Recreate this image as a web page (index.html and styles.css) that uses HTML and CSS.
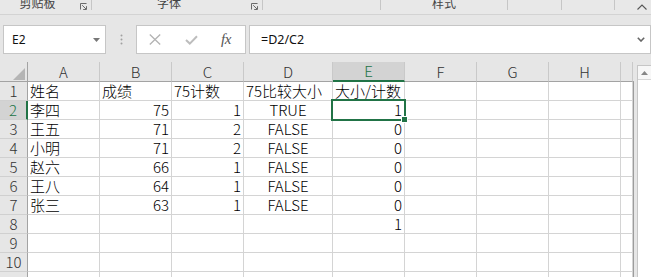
FILE: index.html
```html
<!DOCTYPE html>
<html lang="zh-CN">
<head>
<meta charset="utf-8">
<title>Excel</title>
<link rel="stylesheet" href="styles.css">
</head>
<body>
<div class="app">
<div class="ribbon">
  <div class="grp g1"><span class="glabel">剪贴板</span><svg class="launch" viewBox="0 0 7 7"><path d="M0.5 6.5V0.5H6.5M2.2 2.2L6 6M3.2 6.5H6.5V3.2" fill="none" stroke="#6b6b6b" stroke-width="1"/></svg></div>
  <div class="grp g2"><span class="glabel">字体</span><svg class="launch" viewBox="0 0 7 7"><path d="M0.5 6.5V0.5H6.5M2.2 2.2L6 6M3.2 6.5H6.5V3.2" fill="none" stroke="#6b6b6b" stroke-width="1"/></svg></div>
  <div class="grp g3"></div>
  <div class="grp g4"><span class="glabel">样式</span></div>
  <div class="grp g5"></div>
  <div class="grp g6"></div>
  <div class="grp g7"><svg class="caret" viewBox="0 0 10 6"><path d="M0.5 5.5L5 1L9.5 5.5" fill="none" stroke="#555" stroke-width="1.1"/></svg></div>
</div>

<div class="fbar">
  <div class="namebox"><span class="nbtext">E2</span><svg class="tri" viewBox="0 0 7 4"><path d="M0 0H7L3.5 4Z" fill="#777"/></svg></div>
  <div class="dots"><svg viewBox="0 0 3 11" width="3" height="11"><circle cx="1.5" cy="1.5" r="1" fill="#a0a0a0"/><circle cx="1.5" cy="5.5" r="1" fill="#a0a0a0"/><circle cx="1.5" cy="9.5" r="1" fill="#a0a0a0"/></svg></div>
  <div class="fbtns">
    <svg class="xbtn" viewBox="0 0 12 11"><path d="M0.8 0.5L11.2 10.5M11.2 0.5L0.8 10.5" stroke="#b3b3b3" stroke-width="1.3" fill="none"/></svg>
    <svg class="okbtn" viewBox="0 0 13 10"><path d="M1 5L4.8 8.6L12 1.2" stroke="#bdbdbd" stroke-width="2" fill="none"/></svg>
    <span class="fx">fx</span>
  </div>
  <div class="finput"><span class="ftext">=D2/C2</span><svg class="chev" viewBox="0 0 8 5"><path d="M0.8 0.8L4 4L7.2 0.8" fill="none" stroke="#666" stroke-width="1.6"/></svg></div>
</div>

<div class="sheetwrap">
  <div class="sheet">
    <div class="c ch corner"><svg class="selall" viewBox="0 0 12 12"><path d="M12 0V12H0Z" fill="#b5b5b5"/></svg></div>
    <div class="c ch">A</div><div class="c ch">B</div><div class="c ch">C</div><div class="c ch">D</div><div class="c ch act-col">E</div><div class="c ch">F</div><div class="c ch">G</div><div class="c ch">H</div><div class="c ch"></div><div class="edge edge-h"></div>

    <div class="c rh">1</div><div class="c">姓名</div><div class="c">成绩</div><div class="c">75计数</div><div class="c">75比较大小</div><div class="c">大小/计数</div><div class="c"></div><div class="c"></div><div class="c"></div><div class="c"></div><div class="edge"></div>

    <div class="c rh act-row">2</div><div class="c">李四</div><div class="c r">75</div><div class="c r">1</div><div class="c m">TRUE</div><div class="c r active">1<span class="selbox"><span class="handle"></span></span></div><div class="c"></div><div class="c"></div><div class="c"></div><div class="c"></div><div class="edge"></div>

    <div class="c rh">3</div><div class="c">王五</div><div class="c r">71</div><div class="c r">2</div><div class="c m">FALSE</div><div class="c r">0</div><div class="c"></div><div class="c"></div><div class="c"></div><div class="c"></div><div class="edge"></div>

    <div class="c rh">4</div><div class="c">小明</div><div class="c r">71</div><div class="c r">2</div><div class="c m">FALSE</div><div class="c r">0</div><div class="c"></div><div class="c"></div><div class="c"></div><div class="c"></div><div class="edge"></div>

    <div class="c rh">5</div><div class="c">赵六</div><div class="c r">66</div><div class="c r">1</div><div class="c m">FALSE</div><div class="c r">0</div><div class="c"></div><div class="c"></div><div class="c"></div><div class="c"></div><div class="edge"></div>

    <div class="c rh">6</div><div class="c">王八</div><div class="c r">64</div><div class="c r">1</div><div class="c m">FALSE</div><div class="c r">0</div><div class="c"></div><div class="c"></div><div class="c"></div><div class="c"></div><div class="edge"></div>

    <div class="c rh">7</div><div class="c">张三</div><div class="c r">63</div><div class="c r">1</div><div class="c m">FALSE</div><div class="c r">0</div><div class="c"></div><div class="c"></div><div class="c"></div><div class="c"></div><div class="edge"></div>

    <div class="c rh">8</div><div class="c"></div><div class="c"></div><div class="c"></div><div class="c"></div><div class="c r">1</div><div class="c"></div><div class="c"></div><div class="c"></div><div class="c"></div><div class="edge"></div>

    <div class="c rh">9</div><div class="c"></div><div class="c"></div><div class="c"></div><div class="c"></div><div class="c"></div><div class="c"></div><div class="c"></div><div class="c"></div><div class="c"></div><div class="edge"></div>

    <div class="c rh">10</div><div class="c"></div><div class="c"></div><div class="c"></div><div class="c"></div><div class="c"></div><div class="c"></div><div class="c"></div><div class="c"></div><div class="c"></div><div class="edge"></div>

    <div class="c rh"></div><div class="c"></div><div class="c"></div><div class="c"></div><div class="c"></div><div class="c"></div><div class="c"></div><div class="c"></div><div class="c"></div><div class="c"></div><div class="edge"></div>
  </div>
  <div class="vscroll">
    <div class="upbtn"><svg viewBox="0 0 7 4" width="7" height="4"><path d="M0 4L3.5 0L7 4Z" fill="#868686"/></svg></div>
  </div>
</div>
</div>
</body>
</html>
```

FILE: styles.css
```css
html, body {
  margin: 0;
  padding: 0;
}
body {
  background: #e6e6e6;
  font-family: "Noto Sans CJK SC", sans-serif;
  overflow: hidden;
}
.app {
  width: 651px;
  height: 277px;
  overflow: hidden;
  background: #e6e6e6;
}

/* ribbon */
.ribbon {
  height: 14px;
  border-bottom: 1px solid #d3d3d3;
  display: flex;
  overflow: hidden;
  background: #e8e8e8;
}
.grp {
  box-sizing: border-box;
  height: 10px;
  border-right: 1px solid #c6c6c6;
  display: flex;
  flex: none;
}
.g1 { width: 92px; }
.g2 { width: 171px; }
.g3 { width: 118px; }
.g4 { width: 127px; }
.g5 { width: 54px; }
.g6 { width: 53px; }
.g7 { flex: 1; border-right: none; height: 14px; }
.glabel {
  flex: 1;
  text-align: center;
  font-size: 12px;
  line-height: 12px;
  margin-top: -3px;
  color: #444;
  white-space: nowrap;
}
.launch {
  flex: none;
  width: 7px;
  height: 7px;
  margin: 3px 4px 0 5px;
}
.caret {
  width: 10px;
  height: 6px;
  margin: 4px 0 0 22px;
}

/* formula bar */
.fbar {
  display: flex;
  align-items: flex-start;
  height: 29px;
  padding: 10px 0 8px 3px;
}
.namebox {
  box-sizing: border-box;
  flex: none;
  width: 103px;
  height: 29px;
  background: #fff;
  border: 1px solid #c6c6c6;
  display: flex;
  align-items: center;
  padding: 0 5px 0 8px;
  font-family: "Noto Sans", sans-serif;
  font-size: 12px;
  color: #111;
}
.nbtext { flex: 1; }
.tri { width: 7px; height: 4px; }
.dots {
  flex: none;
  width: 30px;
  height: 29px;
  display: flex;
  align-items: center;
  justify-content: center;
}
.fbtns {
  box-sizing: border-box;
  flex: none;
  width: 110px;
  height: 29px;
  background: #fff;
  border: 1px solid #c6c6c6;
  display: flex;
  align-items: center;
  padding-left: 12px;
}
.xbtn { width: 12px; height: 11px; flex: none; }
.okbtn { width: 13px; height: 10px; flex: none; margin-left: 24px; }
.fx {
  margin-left: 23px;
  font-family: "Liberation Serif", serif;
  font-style: italic;
  font-size: 15px;
  color: #555;
  letter-spacing: -0.5px;
  line-height: 15px;
}
.finput {
  box-sizing: border-box;
  flex: none;
  width: 402px;
  height: 29px;
  margin-left: 3px;
  background: #fff;
  border: 1px solid #c6c6c6;
  display: flex;
  align-items: center;
  padding: 0 5px 0 11px;
  font-family: "Noto Sans", sans-serif;
  font-size: 12.5px;
  color: #111;
}
.ftext { flex: 1; }
.chev { width: 8px; height: 5px; }

/* sheet */
.sheetwrap {
  display: flex;
  align-items: flex-start;
}
.sheet {
  flex: none;
  display: grid;
  grid-template-columns: 28px 72px 72px 72px 89px 72px 72px 72px 72px 12px 1px;
  grid-template-rows: 20px;
  grid-auto-rows: 19px;
}
.c {
  box-sizing: border-box;
  border-right: 1px solid #d4d4d4;
  border-bottom: 1px solid #d4d4d4;
  background: #fff;
  font-size: 15px;
  font-weight: 300;
  line-height: 18px;
  padding: 0 2px;
  white-space: nowrap;
  overflow: hidden;
  color: #000;
}
.r { text-align: right; }
.m { text-align: center; }
.ch {
  background: #e6e6e6;
  border-right-color: #c9c9c9;
  border-bottom-color: #a3a3a3;
  text-align: center;
  line-height: 19px;
  color: #333;
}
.corner {
  position: relative;
  border-right-color: #a3a3a3;
}
.selall {
  position: absolute;
  right: 2px;
  bottom: 1px;
  width: 12px;
  height: 12px;
}
.rh {
  background: #e6e6e6;
  border-right-color: #a3a3a3;
  border-bottom-color: #d0d0d0;
  text-align: center;
  color: #333;
  padding: 0;
}
.act-col {
  background: #d3d3d3;
  color: #217346;
  border-bottom: 2px solid #217346;
  line-height: 18px;
}
.act-row {
  background: #d3d3d3;
  color: #217346;
  border-right: 2px solid #217346;
}
.edge {
  background: #9c9c9c;
}
.edge-h {
  box-sizing: border-box;
  background: #e6e6e6;
  border-bottom: 1px solid #a3a3a3;
}
.active {
  position: relative;
  overflow: visible;
}
.selbox {
  position: absolute;
  left: -2px;
  top: -2px;
  right: -2px;
  bottom: -2px;
  border: 2px solid #217346;
  pointer-events: none;
}
.handle {
  position: absolute;
  right: -4px;
  bottom: -4px;
  width: 5px;
  height: 5px;
  background: #217346;
  border: 1px solid #fff;
}

/* vertical scrollbar */
.vscroll {
  flex: none;
  box-sizing: border-box;
  width: 14px;
  height: 230px;
  margin: 3px 0 0 3px;
  background: #fff;
  border-left: 1px solid #c6c6c6;
  border-top: 1px solid #c6c6c6;
}
.upbtn {
  box-sizing: border-box;
  height: 14px;
  border-bottom: 1px solid #d6d6d6;
  display: flex;
  align-items: center;
  justify-content: center;
  background: #f7f7f7;
}
```
